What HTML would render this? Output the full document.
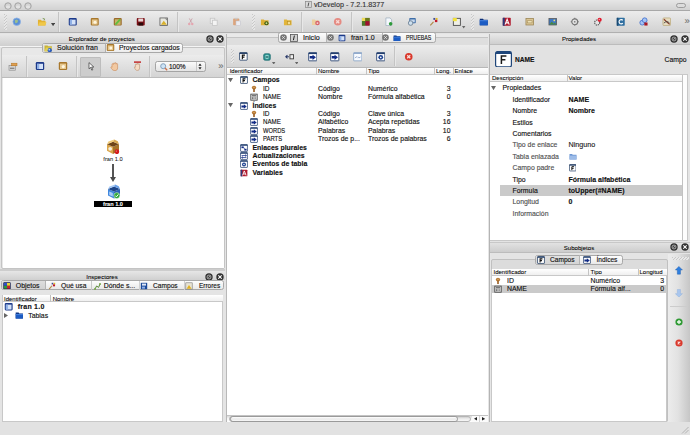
<!DOCTYPE html><html><head><meta charset="utf-8"><title>vDevelop - 7.2.1.8377</title><style>
html,body{margin:0;padding:0}
body{width:690px;height:435px;overflow:hidden;position:relative;background:#e4e4e4;font-family:"Liberation Sans", sans-serif;}
div,svg{position:absolute;box-sizing:border-box}
.t{font-family:"Liberation Sans", sans-serif;-webkit-text-stroke:0.13px currentColor;}

</style></head><body>
<div style="left:0px;top:0px;width:690px;height:10.5px;background:linear-gradient(#e6e6e6,#d2d2d2);border-bottom:1px solid #a8a8a8;"></div>
<svg style="left:3.5px;top:1.5px" width="8" height="8" viewBox="0 0 8 8" preserveAspectRatio="none"><circle cx="4" cy="4" r="3.200" fill="#d4d4d4" stroke="#9c9c9c" stroke-width="0.900"/><ellipse cx="4" cy="5" rx="2.200" ry="1.600" fill="#e2e2e2"/></svg>
<svg style="left:13.600000000000001px;top:1.5px" width="8" height="8" viewBox="0 0 8 8" preserveAspectRatio="none"><circle cx="4" cy="4" r="3.200" fill="#d4d4d4" stroke="#9c9c9c" stroke-width="0.900"/><ellipse cx="4" cy="5" rx="2.200" ry="1.600" fill="#e2e2e2"/></svg>
<svg style="left:24.4px;top:1.5px" width="8" height="8" viewBox="0 0 8 8" preserveAspectRatio="none"><circle cx="4" cy="4" r="3.200" fill="#d4d4d4" stroke="#9c9c9c" stroke-width="0.900"/><ellipse cx="4" cy="5" rx="2.200" ry="1.600" fill="#e2e2e2"/></svg>
<svg style="left:305.3px;top:1.4000000000000004px" width="7" height="7" viewBox="0 0 7 7" preserveAspectRatio="none"><rect x="0.5" y="0.5" width="6" height="6" fill="#d8d8d8" stroke="#888" stroke-width="0.7"/><path d="M3.8 1.6L3 5.4" stroke="#444" stroke-width="0.9"/></svg>
<div class="t" style="top:0.0px;height:10px;line-height:10px;font-size:7.2px;color:#333;white-space:pre;left:314px;">vDevelop - 7.2.1.8377</div>
<svg style="left:675.5px;top:2.7px" width="10" height="5" viewBox="0 0 10 5" preserveAspectRatio="none"><rect x="0.5" y="0.5" width="9" height="4" rx="2" fill="#dcdcdc" stroke="#8e8e8e" stroke-width="0.8"/></svg>
<div style="left:0px;top:10.5px;width:690px;height:22.5px;background:linear-gradient(#ececec,#d2d2d2);border-bottom:1px solid #b0b0b0;"></div>
<div style="left:3.5px;top:14px;width:3px;height:16px;background:repeating-linear-gradient(135deg,#c6c6c6 0,#c6c6c6 1px,#e8e8e8 1px,#e8e8e8 2.2px);opacity:.9;"></div>
<svg style="left:11.55px;top:16.95px" width="9.5" height="9.5" viewBox="0 0 10 10" preserveAspectRatio="none"><circle cx="5" cy="5" r="4" fill="#5b8fd6" stroke="#8fb2e4" stroke-width="0.8"/><path d="M3 3.5l2-1 1.5 1.5-1 2-2 .5z" fill="#9fc08a"/></svg>
<svg style="left:37.25px;top:16.95px" width="9.5" height="9.5" viewBox="0 0 10 10" preserveAspectRatio="none"><path d="M1 3h3l1 1h4v5H1z" fill="#e3b233"/><path d="M1 9l1.5-3.5H10L8.5 9z" fill="#f0c84a"/><path d="M6 1.5l2 .5-.5 1.5" fill="none" stroke="#6a8a3a" stroke-width="0.8"/></svg>
<svg style="left:50.9px;top:23.099999999999998px" width="4.2" height="3.2" viewBox="0 0 4.2 3.2" preserveAspectRatio="none"><path d="M0 0h4.2L2.1 3.2z" fill="#444"/></svg>
<div style="left:58px;top:12px;width:1px;height:20px;background:#c4c4c4;box-shadow:1px 0 0 #e8e8e8;"></div>
<svg style="left:67.75px;top:16.95px" width="9.5" height="9.5" viewBox="0 0 10 10" preserveAspectRatio="none"><rect x="0.800" y="1" width="8.400" height="8" rx="1.200" fill="#1c3a8a"/><rect x="2" y="2.800" width="6" height="5.200" fill="#d4e2f8"/><rect x="2" y="2.800" width="2.200" height="5.200" fill="#8fb0e6"/></svg>
<svg style="left:90.25px;top:16.95px" width="9.5" height="9.5" viewBox="0 0 10 10" preserveAspectRatio="none"><rect x="0.8" y="1" width="8.4" height="8" rx="1.2" fill="#a8772c"/><rect x="2" y="2.6" width="6" height="5.4" fill="#e6c88f"/><circle cx="5.3" cy="5.6" r="1.6" fill="#fff6e0"/></svg>
<svg style="left:113.25px;top:16.95px" width="9.5" height="9.5" viewBox="0 0 10 10" preserveAspectRatio="none"><rect x="0.8" y="1" width="8.4" height="8" rx="1.2" fill="#9a6a2a"/><rect x="2" y="2.4" width="6" height="5.8" fill="#c9b36a"/><path d="M2.5 8L7.5 2.5" stroke="#5fbf3f" stroke-width="1.8"/></svg>
<svg style="left:136.25px;top:16.95px" width="9.5" height="9.5" viewBox="0 0 10 10" preserveAspectRatio="none"><rect x="0.8" y="1" width="8.4" height="8" rx="1" fill="#7a1016"/><rect x="2.4" y="1.6" width="5.2" height="3.2" fill="#e9d6d6"/><rect x="2.6" y="6" width="4.8" height="3" fill="#2a0a0a"/></svg>
<svg style="left:159.25px;top:16.95px" width="9.5" height="9.5" viewBox="0 0 10 10" preserveAspectRatio="none"><rect x="1" y="1" width="8" height="8" fill="#e8e8e0" stroke="#555" stroke-width="0.8"/><path d="M2 8.2L5 4l3.4 4.2z" fill="#d8b02a"/><path d="M6 1.4h2.6V4z" fill="#888"/></svg>
<div style="left:177px;top:12px;width:1px;height:20px;background:#c4c4c4;box-shadow:1px 0 0 #e8e8e8;"></div>
<svg style="left:186.25px;top:16.95px" width="9.5" height="9.5" viewBox="0 0 10 10" preserveAspectRatio="none"><path d="M3.5 1.5L6 6M6.5 1.5L4 6" stroke="#c9a0a8" stroke-width="0.9" fill="none"/><circle cx="3.4" cy="7.3" r="1.3" fill="#e4a6b0"/><circle cx="6.6" cy="7.3" r="1.3" fill="#e4a6b0"/></svg>
<svg style="left:209.25px;top:16.95px" width="9.5" height="9.5" viewBox="0 0 10 10" preserveAspectRatio="none"><rect x="1.3" y="1.3" width="4.8" height="5.4" fill="#eee" stroke="#c4c4c4" stroke-width="0.8"/><rect x="3.8" y="3.4" width="4.8" height="5.4" fill="#f4f4f4" stroke="#c4c4c4" stroke-width="0.8"/></svg>
<svg style="left:232.25px;top:16.95px" width="9.5" height="9.5" viewBox="0 0 10 10" preserveAspectRatio="none"><rect x="1.2" y="1.6" width="6.4" height="7" rx="0.8" fill="#dca47c"/><rect x="3" y="0.9" width="2.8" height="1.6" fill="#c9c9c9"/><rect x="4.2" y="4.2" width="4.6" height="4.8" fill="#ececf2" stroke="#c4c4cc" stroke-width="0.6"/></svg>
<div style="left:252px;top:14px;width:3px;height:16px;background:repeating-linear-gradient(135deg,#c6c6c6 0,#c6c6c6 1px,#e8e8e8 1px,#e8e8e8 2.2px);opacity:.9;"></div>
<svg style="left:260.25px;top:16.95px" width="9.5" height="9.5" viewBox="0 0 10 10" preserveAspectRatio="none"><path d="M1 2.5h3l.8.9H9v5.4H1z" fill="#ddb035"/><circle cx="6.8" cy="6.6" r="2.2" fill="#3c5a12"/><circle cx="6.8" cy="6.6" r="1" fill="#cfe08a"/></svg>
<svg style="left:282.75px;top:16.95px" width="9.5" height="9.5" viewBox="0 0 10 10" preserveAspectRatio="none"><path d="M1 2.5h3l.8.9H9v5.4H1z" fill="#e2b53a"/><rect x="5" y="5" width="2.6" height="3" fill="#f3dc92" stroke="#b08a20" stroke-width="0.5"/></svg>
<div style="left:301px;top:12px;width:1px;height:20px;background:#c4c4c4;box-shadow:1px 0 0 #e8e8e8;"></div>
<svg style="left:310.75px;top:16.95px" width="9.5" height="9.5" viewBox="0 0 10 10" preserveAspectRatio="none"><path d="M1 2.5h3l.8.9H8.4v5H1z" fill="#ecd0a0"/><circle cx="6.8" cy="6.4" r="2.4" fill="#d8646a"/><circle cx="6.8" cy="6.4" r="1" fill="#f6d8d8"/></svg>
<svg style="left:333.25px;top:16.95px" width="9.5" height="9.5" viewBox="0 0 10 10" preserveAspectRatio="none"><circle cx="5" cy="5" r="4" fill="#e58a82"/><path d="M3.4 3.4l3.2 3.2M6.6 3.4L3.4 6.6" stroke="#f8dcd8" stroke-width="1.3"/></svg>
<div style="left:351px;top:12px;width:1px;height:20px;background:#c4c4c4;box-shadow:1px 0 0 #e8e8e8;"></div>
<svg style="left:361.25px;top:16.95px" width="9.5" height="9.5" viewBox="0 0 10 10" preserveAspectRatio="none"><rect x="1" y="1" width="8" height="8" fill="#5a6a1a"/><rect x="1" y="1" width="3.6" height="3.4" fill="#f0dc5a"/><rect x="4.6" y="1" width="4.4" height="3.4" fill="#6a7a1a"/><rect x="1" y="4.4" width="3.6" height="4.6" fill="#4a7a2a"/><rect x="4.6" y="4.4" width="4.4" height="4.6" fill="#a01030"/></svg>
<svg style="left:383.75px;top:16.95px" width="9.5" height="9.5" viewBox="0 0 10 10" preserveAspectRatio="none"><path d="M2 1h4.4L8 2.8V9H2z" fill="#f4f8fc" stroke="#9ab" stroke-width="0.7"/><circle cx="7" cy="7.2" r="1.9" fill="#2f9a3a"/></svg>
<svg style="left:406.75px;top:16.95px" width="9.5" height="9.5" viewBox="0 0 10 10" preserveAspectRatio="none"><rect x="2.4" y="1" width="6.8" height="5.6" rx="0.8" fill="#3f6ea8"/><rect x="3.4" y="2.6" width="4.8" height="3" fill="#c6d8ee"/><circle cx="3.8" cy="6.4" r="2.4" fill="#cfe0ee" stroke="#6b7f93" stroke-width="0.9"/></svg>
<svg style="left:429.25px;top:16.95px" width="9.5" height="9.5" viewBox="0 0 10 10" preserveAspectRatio="none"><path d="M1.4 8.8L5.2 4.6" stroke="#b08a4a" stroke-width="1.3"/><rect x="4.6" y="1" width="4.4" height="4.4" fill="#ede4e4"/><rect x="4.6" y="1" width="2" height="2" fill="#3a4a9a"/><rect x="7" y="1" width="2" height="2" fill="#e0c020"/><rect x="6.2" y="3" width="2.6" height="2.4" fill="#c01828"/></svg>
<svg style="left:452.25px;top:16.95px" width="9.5" height="9.5" viewBox="0 0 10 10" preserveAspectRatio="none"><rect x="1.4" y="1.4" width="7.4" height="7.4" fill="#efefe6" stroke="#444" stroke-width="0.9"/><rect x="1" y="1" width="4" height="3.4" fill="#f2e23a"/></svg>
<svg style="left:462.3px;top:26.2px" width="3.4" height="2.6" viewBox="0 0 3.4 2.6" preserveAspectRatio="none"><path d="M0 0h3.4L1.7 2.6z" fill="#666"/></svg>
<div style="left:471px;top:14px;width:3px;height:16px;background:repeating-linear-gradient(135deg,#c6c6c6 0,#c6c6c6 1px,#e8e8e8 1px,#e8e8e8 2.2px);opacity:.9;"></div>
<svg style="left:479.25px;top:16.95px" width="9.5" height="9.5" viewBox="0 0 10 10" preserveAspectRatio="none"><path d="M0.800 1.800h3.400l.8 1h4.200v6H0.800z" fill="#0a2f7a"/><rect x="0.800" y="3.400" width="8.400" height="5.400" fill="#1c5cc4"/><rect x="0.800" y="3.400" width="8.400" height="1" fill="#4a86e0"/></svg>
<svg style="left:501.75px;top:16.95px" width="9.5" height="9.5" viewBox="0 0 10 10" preserveAspectRatio="none"><rect x="0.8" y="0.8" width="8.4" height="8.4" rx="0.8" fill="#b0182c"/><rect x="0.8" y="0.8" width="2" height="8.4" fill="#2a3a7a"/><path d="M3.2 8L5.4 2.4 7.6 8M4 6.2h2.8" stroke="#fff" stroke-width="1.1" fill="none"/></svg>
<svg style="left:524.75px;top:16.95px" width="9.5" height="9.5" viewBox="0 0 10 10" preserveAspectRatio="none"><rect x="1" y="1.6" width="8" height="6.8" fill="#d9c493" stroke="#9a8350" stroke-width="0.8"/><rect x="2.4" y="4" width="5" height="2.2" fill="#efe2b8" stroke="#9a8350" stroke-width="0.5"/></svg>
<svg style="left:547.75px;top:16.95px" width="9.5" height="9.5" viewBox="0 0 10 10" preserveAspectRatio="none"><rect x="1" y="1.6" width="8" height="6.8" fill="#3f78c0" stroke="#555" stroke-width="0.8"/><path d="M1.4 8l2.6-3 2 2 1.4-1.2L8.6 8z" fill="#4a8a3a"/><circle cx="6.6" cy="3.6" r="0.9" fill="#f4e070"/></svg>
<svg style="left:570.25px;top:16.95px" width="9.5" height="9.5" viewBox="0 0 10 10" preserveAspectRatio="none"><circle cx="5" cy="5" r="3.1" fill="#e2e2e2" stroke="#777" stroke-width="1.2"/><circle cx="5" cy="5" r="0.9" fill="#777"/><path d="M5 0.8v1.2M5 8v1.2M0.8 5h1.2M8 5h1.2" stroke="#777" stroke-width="1.1"/></svg>
<svg style="left:593.25px;top:16.95px" width="9.5" height="9.5" viewBox="0 0 10 10" preserveAspectRatio="none"><circle cx="4.4" cy="5.8" r="2.7" fill="#e4e4e4" stroke="#555" stroke-width="1.2" stroke-dasharray="1.4 0.8"/><circle cx="7" cy="3" r="2.2" fill="#e0182c"/><circle cx="6.6" cy="2.6" r="0.7" fill="#f8b0b0"/></svg>
<svg style="left:616.25px;top:16.95px" width="9.5" height="9.5" viewBox="0 0 10 10" preserveAspectRatio="none"><rect x="0.8" y="0.8" width="8.4" height="8.4" rx="0.8" fill="#2f6fa0"/><rect x="0.8" y="0.8" width="1.6" height="8.4" fill="#1d4a70"/><path d="M7.2 3.4A2.3 2.3 0 1 0 7.2 6.6" stroke="#fff" stroke-width="1.2" fill="none"/></svg>
<svg style="left:639.25px;top:16.95px" width="9.5" height="9.5" viewBox="0 0 10 10" preserveAspectRatio="none"><circle cx="3.400" cy="6" r="2.500" fill="#a4c4f4" stroke="#3a68cc" stroke-width="0.800"/><circle cx="6" cy="3.400" r="2.500" fill="#a4c4f4" stroke="#3a68cc" stroke-width="0.800"/><rect x="5.600" y="5.800" width="3.400" height="3.200" fill="#a81824"/></svg>
<svg style="left:661.75px;top:16.95px" width="9.5" height="9.5" viewBox="0 0 10 10" preserveAspectRatio="none"><rect x="1" y="1" width="8" height="8" rx="1" fill="#e6dcc0" stroke="#b09a60" stroke-width="0.6"/><path d="M2 2.4l6 5.4" stroke="#8a3a2a" stroke-width="1.2"/><path d="M2 6.4c2-2 4-2 6 0" stroke="#444" stroke-width="0.9" fill="none"/></svg>
<div class="t" style="top:16.3px;height:10px;line-height:10px;font-size:9.5px;color:#707070;white-space:pre;left:684.5px;">»</div>
<div style="left:0px;top:33.5px;width:225.5px;height:12px;background:linear-gradient(#e8e8e8,#cfcfcf);"></div>
<div style="left:0px;top:45.5px;width:225.5px;height:1.5px;background:#f4f4f4;"></div>
<div class="t" style="top:34.3px;height:10px;line-height:10px;font-size:6.1px;color:#000;white-space:pre;-webkit-text-stroke-width:0.06px;left:1.7000000000000028px;width:200px;text-align:center;">Explorador de proyectos</div>
<svg style="left:205.6px;top:34.6px" width="8" height="8" viewBox="0 0 8 8" preserveAspectRatio="none"><circle cx="4" cy="4" r="3.700" fill="#303030"/><circle cx="4" cy="4" r="2" fill="#444" stroke="#cfcfcf" stroke-width="0.700"/><path d="M3.400 4.600l1.400-1.400" stroke="#e0e0e0" stroke-width="0.700"/></svg>
<svg style="left:216.0px;top:34.6px" width="8" height="8" viewBox="0 0 8 8" preserveAspectRatio="none"><circle cx="4" cy="4" r="3.700" fill="#303030"/><path d="M2.600 2.600l2.800 2.800M5.400 2.600l-2.800 2.800" stroke="#f8f8f8" stroke-width="1.050" stroke-linecap="round"/></svg>
<div style="left:0.5px;top:47px;width:224.5px;height:221.6px;background:#e8e8e8;border:1px solid #c4c4c4;border-radius:2px;"></div>
<div style="left:41.5px;top:42.8px;width:141.8px;height:9.8px;background:linear-gradient(#fdfdfd,#ececec);border:1px solid #a8a8a8;border-radius:2.5px;"></div>
<div style="left:42.5px;top:43.8px;width:62.5px;height:7.8px;background:linear-gradient(#e4e4e4,#d9d9d9);"></div>
<div style="left:105px;top:43.3px;width:1px;height:8.8px;background:#b0b0b0;"></div>
<svg style="left:43.75px;top:43.55px" width="8.5" height="8.5" viewBox="0 0 8.5 8.5" preserveAspectRatio="none"><path d="M0.500 1.400h3l.8.900h3.600v5H0.500z" fill="#c9b437"/><path d="M0.500 7.300L2 3.600h6.300L7 7.300z" fill="#e0cf58"/><circle cx="5.800" cy="6.200" r="2.100" fill="#2a5cc0"/><circle cx="5.300" cy="5.700" r="0.900" fill="#a8caf6"/></svg>
<div class="t" style="top:42.9px;height:10px;line-height:10px;font-size:7.0px;color:#111;white-space:pre;left:57px;">Solución fran</div>
<svg style="left:106.0px;top:43.3px" width="9" height="9" viewBox="0 0 10 10" preserveAspectRatio="none"><rect x="0.8" y="1" width="8.4" height="8" rx="1.2" fill="#a8772c"/><rect x="2" y="2.6" width="6" height="5.4" fill="#e6c88f"/><circle cx="5.3" cy="5.6" r="1.6" fill="#fff6e0"/></svg>
<div class="t" style="top:42.9px;height:10px;line-height:10px;font-size:7.0px;color:#111;white-space:pre;left:118.5px;transform:scaleX(0.981);transform-origin:left center;">Proyectos cargados</div>
<div style="left:1.5px;top:55px;width:222.5px;height:23px;background:linear-gradient(#ececec,#d4d4d4);border-bottom:1px solid #bcbcbc;"></div>
<svg style="left:8.0px;top:61.8px" width="10" height="9" viewBox="0 0 10 9" preserveAspectRatio="none"><rect x="1" y="3.4" width="6.4" height="4.8" fill="#d8d8d8" stroke="#888" stroke-width="0.6"/><rect x="3.6" y="1.2" width="5.4" height="2.6" fill="#e0a050" stroke="#b07020" stroke-width="0.5"/><rect x="2" y="5.6" width="4.4" height="1.4" fill="#888"/></svg>
<div style="left:26px;top:56px;width:1px;height:21px;background:#c4c4c4;box-shadow:1px 0 0 #e8e8e8;"></div>
<svg style="left:35.4px;top:61.3px" width="10" height="10" viewBox="0 0 10 10" preserveAspectRatio="none"><rect x="0.800" y="1" width="8.400" height="8" rx="1.200" fill="#1c3a8a"/><rect x="2" y="2.800" width="6" height="5.200" fill="#d4e2f8"/><rect x="2" y="2.800" width="2.200" height="5.200" fill="#8fb0e6"/></svg>
<svg style="left:58.2px;top:61.3px" width="10" height="10" viewBox="0 0 10 10" preserveAspectRatio="none"><rect x="0.8" y="1" width="8.4" height="8" rx="1.2" fill="#a8772c"/><rect x="2" y="2.6" width="6" height="5.4" fill="#e6c88f"/><circle cx="5.3" cy="5.6" r="1.6" fill="#fff6e0"/></svg>
<div style="left:76px;top:56px;width:1px;height:21px;background:#c4c4c4;box-shadow:1px 0 0 #e8e8e8;"></div>
<div style="left:80px;top:56.5px;width:21px;height:20.5px;background:#cdcdcd;border:1px solid #bdbdbd;border-radius:1px;"></div>
<svg style="left:87.5px;top:62.0px" width="6" height="9" viewBox="0 0 6 9" preserveAspectRatio="none"><path d="M1 0.6v6.2l1.6-1.4 1.2 2.8 1-.5-1.2-2.7h2.2z" fill="#fff" stroke="#333" stroke-width="0.7"/></svg>
<svg style="left:109.5px;top:61.8px" width="9" height="9" viewBox="0 0 9 9" preserveAspectRatio="none"><path d="M2 4V2.4a.7.7 0 011.4 0V1.6a.7.7 0 011.4 0V1.4a.7.7 0 011.4 0v.8a.7.7 0 011.4 0V6c0 1.6-1 2.6-2.6 2.6S2.4 8 1.4 6.4L.8 5.2c.4-.6 1-.4 1.2 0z" fill="#f2c9a2" stroke="#c98a5a" stroke-width="0.6"/></svg>
<svg style="left:132.5px;top:61.3px" width="9" height="10" viewBox="0 0 9 10" preserveAspectRatio="none"><rect x="1" y="0.4" width="7" height="1.4" fill="#c02020"/><path d="M2.4 5V3.6a.7.7 0 011.4 0v-.4a.7.7 0 011.4 0v.2a.7.7 0 011.4 0V7c0 1.4-.8 2.4-2.2 2.4S2.6 8.8 1.8 7.4L1.4 6.2c.4-.5.8-.3 1 0z" fill="#f4dcc4" stroke="#b98a6a" stroke-width="0.6"/></svg>
<div style="left:148.7px;top:56px;width:1px;height:21px;background:#c4c4c4;box-shadow:1px 0 0 #e8e8e8;"></div>
<div style="left:155px;top:61px;width:50.8px;height:10.5px;background:linear-gradient(#fbfbfb,#e4e4e4);border:1px solid #a4a4a4;border-radius:2.5px;"></div>
<div style="left:195.5px;top:62px;width:0.8px;height:8.5px;background:#c8c8c8;"></div>
<svg style="left:159.5px;top:62.5px" width="8" height="8" viewBox="0 0 8 8" preserveAspectRatio="none"><circle cx="3.2" cy="3.2" r="2.5" fill="#cfe4f6" stroke="#7a9ab8" stroke-width="0.9"/><path d="M5 5l2.2 2.2" stroke="#d0704a" stroke-width="1.3"/></svg>
<div class="t" style="top:62.0px;height:10px;line-height:10px;font-size:6.5px;color:#111;white-space:pre;left:169px;">100%</div>
<svg style="left:198.0px;top:62.900000000000006px" width="4" height="7" viewBox="0 0 4 7" preserveAspectRatio="none"><path d="M0.4 2.8L2 0.6 3.6 2.8zM0.4 4.2L2 6.4 3.6 4.2z" fill="#222"/></svg>
<div class="t" style="top:61.0px;height:10px;line-height:10px;font-size:9.5px;color:#707070;white-space:pre;left:218.3px;">»</div>
<div style="left:2.5px;top:78px;width:221.2px;height:189.8px;background:#fff;"></div>
<svg style="left:106.3px;top:138.9px" width="14" height="15.4" viewBox="0 0 14 15" preserveAspectRatio="none"><path d="M1 5L7 7.500V14.500L1 11.500z" fill="#dba64a"/><path d="M13 5L7 7.500V14.500L13 11.500z" fill="#a87428"/><path d="M1 5L7 2.600 13 5 7 7.500z" fill="#6e4518"/><path d="M1 5L2.400 2.400 8.200 0.600 7 2.600z" fill="#f0cc7a"/><path d="M13 5L11.800 2.200 8.200 0.600 7 2.600z" fill="#d8aa52"/><circle cx="4.200" cy="9.600" r="1.900" fill="#f6eedc"/><circle cx="10.900" cy="12.400" r="2.300" fill="#d41c1c"/><circle cx="10.300" cy="11.800" r="0.700" fill="#f08a8a"/></svg>
<div class="t" style="top:154.3px;height:10px;line-height:10px;font-size:5.7px;color:#222;white-space:pre;-webkit-text-stroke-width:0.06px;left:13px;width:200px;text-align:center;">fran 1.0</div>
<div style="left:112.2px;top:164px;width:1.5px;height:15px;background:#555;"></div>
<svg style="left:110.0px;top:177.3px" width="6" height="5" viewBox="0 0 6 5" preserveAspectRatio="none"><path d="M0 0h6L3 5z" fill="#4a4a4a"/></svg>
<svg style="left:106.6px;top:184.0px" width="14" height="15" viewBox="0 0 14 15" preserveAspectRatio="none"><path d="M1 5L7 7.500V14.500L1 11.500z" fill="#4088de"/><path d="M13 5L7 7.500V14.500L13 11.500z" fill="#2a62b8"/><path d="M1 5L7 2.600 13 5 7 7.500z" fill="#1c4488"/><path d="M1 5L2.400 2.400 8.200 0.600 7 2.600z" fill="#a4c8f6"/><path d="M13 5L11.800 2.200 8.200 0.600 7 2.600z" fill="#6aa0e8"/><path d="M2.200 7.400L5.800 8.900V12.600L2.200 11z" fill="#a8ccf8"/><circle cx="9.800" cy="11.600" r="3" fill="#2ea83a" stroke="#eaf6ea" stroke-width="0.500"/><path d="M8.300 11.600l1.100 1.200 2-2.400" stroke="#fff" stroke-width="1" fill="none"/></svg>
<div style="left:94px;top:200.8px;width:38px;height:6.6px;background:#000;"></div>
<div class="t" style="top:199.2px;height:10px;line-height:10px;font-size:5.6px;color:#fff;white-space:pre;font-weight:bold;-webkit-text-stroke-width:0.06px;left:13px;width:200px;text-align:center;">fran 1.0</div>
<div style="left:0px;top:268.7px;width:225.5px;height:2.5px;background:#cdcdcd;"></div>
<div style="left:0px;top:271.2px;width:225.5px;height:9.3px;background:linear-gradient(#e6e6e6,#d0d0d0);"></div>
<div class="t" style="top:271.7px;height:10px;line-height:10px;font-size:6.1px;color:#000;white-space:pre;-webkit-text-stroke-width:0.06px;left:2px;width:200px;text-align:center;">Inspectores</div>
<svg style="left:205.1px;top:272.7px" width="8" height="8" viewBox="0 0 8 8" preserveAspectRatio="none"><circle cx="4" cy="4" r="3.700" fill="#303030"/><circle cx="4" cy="4" r="2" fill="#444" stroke="#cfcfcf" stroke-width="0.700"/><path d="M3.400 4.600l1.400-1.400" stroke="#e0e0e0" stroke-width="0.700"/></svg>
<svg style="left:215.5px;top:272.7px" width="8" height="8" viewBox="0 0 8 8" preserveAspectRatio="none"><circle cx="4" cy="4" r="3.700" fill="#303030"/><path d="M2.600 2.600l2.800 2.800M5.400 2.600l-2.800 2.800" stroke="#f8f8f8" stroke-width="1.050" stroke-linecap="round"/></svg>
<div style="left:0.8px;top:280.3px;width:223.2px;height:10px;background:linear-gradient(#fdfdfd,#e9e9e9);border:1px solid #a8a8a8;border-radius:2.5px;"></div>
<div style="left:1.8px;top:281.3px;width:43.2px;height:8px;background:linear-gradient(#dedede,#d2d2d2);"></div>
<div style="left:45px;top:280.8px;width:1px;height:9px;background:#b4b4b4;"></div>
<div style="left:90.8px;top:280.8px;width:1px;height:9px;background:#c8c8c8;"></div>
<div style="left:138.5px;top:280.8px;width:1px;height:9px;background:#d0d0d0;"></div>
<div style="left:183.5px;top:280.8px;width:1px;height:9px;background:#d0d0d0;"></div>
<svg style="left:2.7px;top:281.7px" width="8" height="7.6" viewBox="0 0 8 7.6" preserveAspectRatio="none"><rect x="0.300" y="0.300" width="7.400" height="7" rx="0.800" fill="#1a2250"/><rect x="1" y="1" width="3" height="2.800" fill="#2f50c8"/><rect x="4" y="1" width="3" height="2.800" fill="#e8d030"/><rect x="1" y="3.800" width="3" height="2.800" fill="#2f9a3a"/><rect x="4" y="3.800" width="3" height="2.800" fill="#c82030"/></svg>
<div class="t" style="top:280.8px;height:10px;line-height:10px;font-size:6.9px;color:#111;white-space:pre;left:15.8px;">Objetos</div>
<svg style="left:47.5px;top:281.8px" width="8" height="8" viewBox="0 0 10 10" preserveAspectRatio="none"><path d="M1.4 8.8L5.2 4.6" stroke="#b08a4a" stroke-width="1.3"/><rect x="4.6" y="1" width="4.4" height="4.4" fill="#ede4e4"/><rect x="4.6" y="1" width="2" height="2" fill="#3a4a9a"/><rect x="7" y="1" width="2" height="2" fill="#e0c020"/><rect x="6.2" y="3" width="2.6" height="2.4" fill="#c01828"/></svg>
<div class="t" style="top:280.8px;height:10px;line-height:10px;font-size:6.9px;color:#111;white-space:pre;left:60.8px;transform:scaleX(0.978);transform-origin:left center;">Qué usa</div>
<svg style="left:92.5px;top:281.8px" width="8" height="8" viewBox="0 0 8 8" preserveAspectRatio="none"><path d="M2 7l1.600-3 2 1.400L7 2" stroke="#5a8a3a" stroke-width="1" fill="none"/><circle cx="2" cy="7" r="1" fill="#7aa84a"/><circle cx="7" cy="2" r="1" fill="#7aa84a"/></svg>
<div class="t" style="top:280.8px;height:10px;line-height:10px;font-size:6.9px;color:#111;white-space:pre;left:103.7px;">Dónde s...</div>
<svg style="left:139.5px;top:281.8px" width="8" height="8" viewBox="0 0 8 8" preserveAspectRatio="none"><rect x="0.8" y="0.8" width="6.400" height="6.400" fill="#1a4a9a"/><rect x="2" y="1.600" width="4" height="2" fill="#dfe8f8"/><rect x="2" y="4.600" width="3" height="2" fill="#8fb0e8"/></svg>
<div class="t" style="top:280.8px;height:10px;line-height:10px;font-size:6.9px;color:#111;white-space:pre;left:153px;transform:scaleX(0.961);transform-origin:left center;">Campos</div>
<svg style="left:185.0px;top:281.8px" width="8" height="8" viewBox="0 0 8 8" preserveAspectRatio="none"><rect x="0.800" y="0.800" width="6.400" height="6.400" fill="#e8e4d4" stroke="#777" stroke-width="0.600"/><path d="M1.600 6.800L4 3l2.600 3.800z" fill="#e0b020"/></svg>
<div class="t" style="top:280.8px;height:10px;line-height:10px;font-size:6.9px;color:#111;white-space:pre;left:198.8px;transform:scaleX(0.937);transform-origin:left center;">Errores</div>
<div style="left:2px;top:294.5px;width:221.2px;height:127.5px;background:#fff;border:1px solid #c8c8c8;"></div>
<div style="left:2.5px;top:295px;width:220.2px;height:7.2px;background:linear-gradient(#ffffff,#efefef);border-bottom:1px solid #c8c8c8;"></div>
<div style="left:49.5px;top:295px;width:1px;height:7px;background:#c0c0c0;"></div>
<div class="t" style="top:293.6px;height:10px;line-height:10px;font-size:6.0px;color:#000;white-space:pre;-webkit-text-stroke-width:0.06px;left:4px;">Identificador</div>
<div class="t" style="top:293.6px;height:10px;line-height:10px;font-size:6.0px;color:#000;white-space:pre;-webkit-text-stroke-width:0.06px;left:52.7px;">Nombre</div>
<svg style="left:4.3px;top:301.90000000000003px" width="9.4" height="9.4" viewBox="0 0 10 10" preserveAspectRatio="none"><rect x="0.800" y="1" width="8.400" height="8" rx="1.200" fill="#1c3a8a"/><rect x="2" y="2.800" width="6" height="5.200" fill="#d4e2f8"/><rect x="2" y="2.800" width="2.200" height="5.200" fill="#8fb0e6"/></svg>
<div class="t" style="top:302.0px;height:10px;line-height:10px;font-size:7px;color:#111;white-space:pre;font-weight:bold;left:17.7px;letter-spacing:0.25px;">fran 1.0</div>
<svg style="left:3.8000000000000003px;top:312.9px" width="4.2" height="5" viewBox="0 0 4.2 5" preserveAspectRatio="none"><path d="M0 0v5L4.2 2.5z" fill="#666"/></svg>
<svg style="left:14.7px;top:310.9px" width="8.6" height="8.6" viewBox="0 0 10 10" preserveAspectRatio="none"><path d="M0.800 1.800h3.400l.8 1h4.200v6H0.800z" fill="#0a2f7a"/><rect x="0.800" y="3.400" width="8.400" height="5.400" fill="#1c5cc4"/><rect x="0.800" y="3.400" width="8.400" height="1" fill="#4a86e0"/></svg>
<div class="t" style="top:310.5px;height:10px;line-height:10px;font-size:6.9px;color:#111;white-space:pre;left:28.2px;">Tablas</div>
<div style="left:225.3px;top:33.5px;width:1.7px;height:389px;background:#e4e4e4;"></div>
<div style="left:225.8px;top:33.5px;width:0.9px;height:389px;background:#b8b8b8;"></div>
<div style="left:227px;top:33.5px;width:260.5px;height:11.5px;background:#dedede;"></div>
<div style="left:227px;top:33.5px;width:260.5px;height:3.8px;background:#e9e9e9;"></div>
<div style="left:227px;top:37.3px;width:260.5px;height:1px;background:#c4c4c4;"></div>
<div style="left:277.5px;top:32.3px;width:158.5px;height:11px;background:linear-gradient(#fdfdfd,#e9e9e9);border:1px solid #a8a8a8;border-radius:2.5px;"></div>
<div style="left:326.5px;top:33.6px;width:55px;height:8.4px;background:linear-gradient(#e0e0e0,#d2d2d2);"></div>
<div style="left:326px;top:33.1px;width:1px;height:9.4px;background:#b4b4b4;"></div>
<div style="left:381.5px;top:33.1px;width:1px;height:9.4px;background:#b4b4b4;"></div>
<svg style="left:279.5px;top:34.3px" width="7" height="7" viewBox="0 0 7 7" preserveAspectRatio="none"><circle cx="3.5" cy="3.5" r="3.300" fill="#767676"/><path d="M2.3 2.3l2.4 2.4M4.7 2.3L2.3 4.7" stroke="#e4e4e4" stroke-width="1"/></svg>
<svg style="left:289.5px;top:33.8px" width="8" height="8" viewBox="0 0 8 8" preserveAspectRatio="none"><rect x="0.500" y="0.500" width="7" height="7" fill="#d0d0d0" stroke="#555" stroke-width="0.800"/><path d="M4.400 1.600L3.400 6.200" stroke="#222" stroke-width="1"/></svg>
<div class="t" style="top:32.8px;height:10px;line-height:10px;font-size:7.2px;color:#111;white-space:pre;left:303px;">Inicio</div>
<svg style="left:326.9px;top:34.3px" width="7" height="7" viewBox="0 0 7 7" preserveAspectRatio="none"><circle cx="3.5" cy="3.5" r="3.300" fill="#767676"/><path d="M2.3 2.3l2.4 2.4M4.7 2.3L2.3 4.7" stroke="#e4e4e4" stroke-width="1"/></svg>
<svg style="left:338.0px;top:33.8px" width="8" height="8" viewBox="0 0 10 10" preserveAspectRatio="none"><rect x="0.800" y="1" width="8.400" height="8" rx="1.200" fill="#1c3a8a"/><rect x="2" y="2.800" width="6" height="5.200" fill="#d4e2f8"/><rect x="2" y="2.800" width="2.200" height="5.200" fill="#8fb0e6"/></svg>
<div class="t" style="top:32.8px;height:10px;line-height:10px;font-size:7.0px;color:#111;white-space:pre;left:351px;">fran 1.0</div>
<svg style="left:381.7px;top:34.3px" width="7" height="7" viewBox="0 0 7 7" preserveAspectRatio="none"><circle cx="3.5" cy="3.5" r="3.300" fill="#767676"/><path d="M2.3 2.3l2.4 2.4M4.7 2.3L2.3 4.7" stroke="#e4e4e4" stroke-width="1"/></svg>
<svg style="left:392.8px;top:33.8px" width="8" height="8" viewBox="0 0 10 10" preserveAspectRatio="none"><path d="M0.800 1.800h3.400l.8 1h4.200v6H0.800z" fill="#0a2f7a"/><rect x="0.800" y="3.400" width="8.400" height="5.400" fill="#1c5cc4"/><rect x="0.800" y="3.400" width="8.400" height="1" fill="#4a86e0"/></svg>
<div class="t" style="top:32.8px;height:10px;line-height:10px;font-size:6.8px;color:#111;white-space:pre;left:406px;transform:scaleX(0.778);transform-origin:left center;">PRUEBAS</div>
<div style="left:227px;top:45px;width:260.5px;height:23px;background:linear-gradient(#ececec,#d4d4d4);border-bottom:1px solid #b8b8b8;"></div>
<div style="left:231px;top:49px;width:3px;height:13.5px;background:repeating-linear-gradient(135deg,#c6c6c6 0,#c6c6c6 1px,#e8e8e8 1px,#e8e8e8 2.2px);opacity:.9;"></div>
<svg style="left:239.4px;top:52.4px" width="8.8" height="8.8" viewBox="0 0 10 10" preserveAspectRatio="none"><rect x="0.7" y="0.7" width="8.600" height="8.600" rx="0.5" fill="#fff" stroke="#1f3a62" stroke-width="0.900"/><rect x="0.7" y="0.7" width="8.600" height="1.500" fill="#1f3a62"/><path d="M3.800 8.200V3.600h3M3.800 5.800h2.400" stroke="#111" stroke-width="1.300" fill="none"/></svg>
<svg style="left:262.5px;top:52.8px" width="8" height="8" viewBox="0 0 10 10" preserveAspectRatio="none"><rect x="0.800" y="0.800" width="8.400" height="8.400" rx="2" fill="#2a8c8c" stroke="#1c6c70" stroke-width="0.800"/><circle cx="5" cy="5" r="2.700" fill="#8fd8d0"/><rect x="3" y="4.300" width="4" height="1.400" fill="#0f4a52"/></svg>
<svg style="left:272.3px;top:61.900000000000006px" width="3.4" height="2.6" viewBox="0 0 3.4 2.6" preserveAspectRatio="none"><path d="M0 0h3.4L1.7 2.6z" fill="#666"/></svg>
<svg style="left:284.75px;top:52.25px" width="9.5" height="9.5" viewBox="0 0 10 10" preserveAspectRatio="none"><path d="M0.800 5h3.400M2.600 3.200L0.800 5l1.800 1.800" stroke="#2a3a6a" stroke-width="1.100" fill="none"/><rect x="5.200" y="2.800" width="3.800" height="4.400" fill="#f0f0f0" stroke="#444" stroke-width="1"/></svg>
<svg style="left:295.1px;top:61.900000000000006px" width="3.4" height="2.6" viewBox="0 0 3.4 2.6" preserveAspectRatio="none"><path d="M0 0h3.4L1.7 2.6z" fill="#666"/></svg>
<svg style="left:307.75px;top:52.25px" width="9.5" height="9.5" viewBox="0 0 10 10" preserveAspectRatio="none"><rect x="0.7" y="0.7" width="8.600" height="8.600" rx="0.5" fill="#fff" stroke="#233f6e" stroke-width="0.900"/><rect x="0.7" y="0.7" width="8.600" height="1.500" fill="#233f6e"/><path d="M1.800 4.300h3V2.900L8.400 5.600 4.800 8.300V6.900H1.800z" fill="#122c86"/></svg>
<svg style="left:330.25px;top:52.25px" width="9.5" height="9.5" viewBox="0 0 10 10" preserveAspectRatio="none"><rect x="0.7" y="0.7" width="8.600" height="8.600" rx="0.5" fill="#fff" stroke="#233f6e" stroke-width="0.900"/><rect x="0.7" y="0.7" width="8.600" height="1.500" fill="#233f6e"/><path d="M1.800 4.300h3V2.900L8.400 5.600 4.800 8.300V6.900H1.800z" fill="#122c86"/></svg>
<svg style="left:352.75px;top:52.25px" width="9.5" height="9.5" viewBox="0 0 10 10" preserveAspectRatio="none"><rect x="0.7" y="0.7" width="8.600" height="8.600" rx="0.5" fill="#f8fbff" stroke="#8aa4c8" stroke-width="0.900"/><rect x="0.7" y="0.7" width="8.600" height="1.300" fill="#8aa4c8"/><path d="M2.200 6.400l1.400-1.400 1 1M5.400 5l1.200 1.400 1.200-1.400" stroke="#5a7ab0" stroke-width="0.700" fill="none"/></svg>
<svg style="left:375.75px;top:52.25px" width="9.5" height="9.5" viewBox="0 0 10 10" preserveAspectRatio="none"><rect x="0.7" y="0.7" width="8.600" height="8.600" rx="0.5" fill="#fff" stroke="#233f6e" stroke-width="0.900"/><rect x="0.7" y="0.7" width="8.600" height="1.500" fill="#233f6e"/><circle cx="5" cy="5.600" r="2.500" fill="#1a3f8f"/><circle cx="5" cy="5.600" r="0.900" fill="#fff"/></svg>
<div style="left:393.5px;top:46px;width:1px;height:20px;background:#c4c4c4;box-shadow:1px 0 0 #e8e8e8;"></div>
<svg style="left:403.75px;top:52.25px" width="9.5" height="9.5" viewBox="0 0 10 10" preserveAspectRatio="none"><circle cx="5" cy="5" r="4" fill="#d9382c"/><path d="M3.4 3.4l3.2 3.2M6.6 3.4L3.4 6.6" stroke="#fbe0dc" stroke-width="1.3"/></svg>
<div style="left:227px;top:68px;width:260.5px;height:354px;background:#fff;"></div>
<div style="left:227px;top:68px;width:260.5px;height:7.2px;background:linear-gradient(#ffffff,#efefef);border-bottom:1px solid #c8c8c8;"></div>
<div style="left:316px;top:68px;width:1px;height:7px;background:#c4c4c4;"></div>
<div style="left:366px;top:68px;width:1px;height:7px;background:#c4c4c4;"></div>
<div style="left:434px;top:68px;width:1px;height:7px;background:#c4c4c4;"></div>
<div style="left:452.5px;top:68px;width:1px;height:7px;background:#c4c4c4;"></div>
<div class="t" style="top:66.3px;height:10px;line-height:10px;font-size:6.0px;color:#000;white-space:pre;-webkit-text-stroke-width:0.06px;left:229.7px;">Identificador</div>
<div class="t" style="top:66.3px;height:10px;line-height:10px;font-size:6.0px;color:#000;white-space:pre;-webkit-text-stroke-width:0.06px;left:318px;">Nombre</div>
<div class="t" style="top:66.3px;height:10px;line-height:10px;font-size:6.0px;color:#000;white-space:pre;-webkit-text-stroke-width:0.06px;left:368px;">Tipo</div>
<div class="t" style="top:66.3px;height:10px;line-height:10px;font-size:6.0px;color:#000;white-space:pre;-webkit-text-stroke-width:0.06px;left:436px;">Long.</div>
<div class="t" style="top:66.3px;height:10px;line-height:10px;font-size:6.0px;color:#000;white-space:pre;-webkit-text-stroke-width:0.06px;left:454.5px;">Enlace</div>
<svg style="left:228.0px;top:78.2px" width="5" height="4.2" viewBox="0 0 5 4.2" preserveAspectRatio="none"><path d="M0 0h5L2.5 4.2z" fill="#666"/></svg>
<svg style="left:240.0px;top:76.3px" width="8" height="8" viewBox="0 0 10 10" preserveAspectRatio="none"><rect x="0.7" y="0.7" width="8.600" height="8.600" rx="0.5" fill="#fff" stroke="#1f3a62" stroke-width="0.900"/><rect x="0.7" y="0.7" width="8.600" height="1.500" fill="#1f3a62"/><path d="M3.800 8.200V3.600h3M3.800 5.800h2.400" stroke="#111" stroke-width="1.300" fill="none"/></svg>
<div class="t" style="top:75.3px;height:10px;line-height:10px;font-size:6.9px;color:#111;white-space:pre;font-weight:bold;left:252.5px;">Campos</div>
<svg style="left:250.0px;top:84.7px" width="8" height="8" viewBox="0 0 10 10" preserveAspectRatio="none"><ellipse cx="5" cy="3.200" rx="2.700" ry="2.300" fill="#b87a34"/><circle cx="5" cy="2.800" r="0.700" fill="#ecc890"/><rect x="4" y="4.600" width="2" height="4.200" fill="#9a5c22"/></svg>
<div class="t" style="top:83.7px;height:10px;line-height:10px;font-size:6.9px;color:#111;white-space:pre;left:262.5px;transform:scaleX(0.942);transform-origin:left center;">ID</div>
<div class="t" style="top:83.7px;height:10px;line-height:10px;font-size:6.9px;color:#111;white-space:pre;left:318px;">Código</div>
<div class="t" style="top:83.7px;height:10px;line-height:10px;font-size:6.9px;color:#111;white-space:pre;left:368px;">Numérico</div>
<div class="t" style="top:83.7px;height:10px;line-height:10px;font-size:6.9px;color:#111;white-space:pre;right:239.5px;text-align:right;">3</div>
<svg style="left:250.0px;top:93.1px" width="8" height="8" viewBox="0 0 10 10" preserveAspectRatio="none"><rect x="1" y="1.400" width="8" height="7.600" fill="#e4e4e4" stroke="#3c3c3c" stroke-width="1"/><rect x="2.400" y="2.800" width="5.200" height="1.400" fill="#555"/><rect x="2.400" y="5.200" width="2" height="2.600" fill="#777"/><rect x="5.400" y="5.200" width="2.200" height="2.600" fill="#999"/></svg>
<div class="t" style="top:92.1px;height:10px;line-height:10px;font-size:6.9px;color:#111;white-space:pre;left:262.5px;transform:scaleX(0.898);transform-origin:left center;">NAME</div>
<div class="t" style="top:92.1px;height:10px;line-height:10px;font-size:6.9px;color:#111;white-space:pre;left:318px;">Nombre</div>
<div class="t" style="top:92.1px;height:10px;line-height:10px;font-size:6.9px;color:#111;white-space:pre;left:368px;">Fórmula alfabética</div>
<div class="t" style="top:92.1px;height:10px;line-height:10px;font-size:6.9px;color:#111;white-space:pre;right:239.5px;text-align:right;">0</div>
<svg style="left:228.0px;top:103.4px" width="5" height="4.2" viewBox="0 0 5 4.2" preserveAspectRatio="none"><path d="M0 0h5L2.5 4.2z" fill="#666"/></svg>
<svg style="left:240.0px;top:101.5px" width="8" height="8" viewBox="0 0 10 10" preserveAspectRatio="none"><rect x="0.7" y="0.7" width="8.600" height="8.600" rx="0.5" fill="#fff" stroke="#233f6e" stroke-width="0.900"/><rect x="0.7" y="0.7" width="8.600" height="1.500" fill="#233f6e"/><path d="M1.800 4.300h3V2.900L8.400 5.600 4.800 8.300V6.900H1.800z" fill="#122c86"/></svg>
<div class="t" style="top:100.5px;height:10px;line-height:10px;font-size:6.9px;color:#111;white-space:pre;font-weight:bold;left:252.5px;">Índices</div>
<svg style="left:250.0px;top:109.9px" width="8" height="8" viewBox="0 0 10 10" preserveAspectRatio="none"><ellipse cx="5" cy="3.200" rx="2.700" ry="2.300" fill="#b87a34"/><circle cx="5" cy="2.800" r="0.700" fill="#ecc890"/><rect x="4" y="4.600" width="2" height="4.200" fill="#9a5c22"/></svg>
<div class="t" style="top:108.9px;height:10px;line-height:10px;font-size:6.9px;color:#111;white-space:pre;left:262.5px;transform:scaleX(0.942);transform-origin:left center;">ID</div>
<div class="t" style="top:108.9px;height:10px;line-height:10px;font-size:6.9px;color:#111;white-space:pre;left:318px;">Código</div>
<div class="t" style="top:108.9px;height:10px;line-height:10px;font-size:6.9px;color:#111;white-space:pre;left:368px;">Clave única</div>
<div class="t" style="top:108.9px;height:10px;line-height:10px;font-size:6.9px;color:#111;white-space:pre;right:239.5px;text-align:right;">3</div>
<svg style="left:250.0px;top:118.3px" width="8" height="8" viewBox="0 0 10 10" preserveAspectRatio="none"><rect x="0.7" y="0.7" width="8.600" height="8.600" rx="0.5" fill="#fff" stroke="#233f6e" stroke-width="0.900"/><rect x="0.7" y="0.7" width="8.600" height="1.500" fill="#233f6e"/><path d="M1.800 4.300h3V2.900L8.400 5.600 4.800 8.300V6.900H1.800z" fill="#122c86"/></svg>
<div class="t" style="top:117.3px;height:10px;line-height:10px;font-size:6.9px;color:#111;white-space:pre;left:262.5px;transform:scaleX(0.898);transform-origin:left center;">NAME</div>
<div class="t" style="top:117.3px;height:10px;line-height:10px;font-size:6.9px;color:#111;white-space:pre;left:318px;">Alfabético</div>
<div class="t" style="top:117.3px;height:10px;line-height:10px;font-size:6.9px;color:#111;white-space:pre;left:368px;">Acepta repetidas</div>
<div class="t" style="top:117.3px;height:10px;line-height:10px;font-size:6.9px;color:#111;white-space:pre;right:239.5px;text-align:right;">16</div>
<svg style="left:250.0px;top:126.69999999999999px" width="8" height="8" viewBox="0 0 10 10" preserveAspectRatio="none"><rect x="0.7" y="0.7" width="8.600" height="8.600" rx="0.5" fill="#fff" stroke="#233f6e" stroke-width="0.900"/><rect x="0.7" y="0.7" width="8.600" height="1.500" fill="#233f6e"/><path d="M1.800 4.300h3V2.900L8.400 5.600 4.800 8.300V6.900H1.800z" fill="#122c86"/></svg>
<div class="t" style="top:125.69999999999999px;height:10px;line-height:10px;font-size:6.9px;color:#111;white-space:pre;left:262.5px;transform:scaleX(0.839);transform-origin:left center;">WORDS</div>
<div class="t" style="top:125.69999999999999px;height:10px;line-height:10px;font-size:6.9px;color:#111;white-space:pre;left:318px;">Palabras</div>
<div class="t" style="top:125.69999999999999px;height:10px;line-height:10px;font-size:6.9px;color:#111;white-space:pre;left:368px;">Palabras</div>
<div class="t" style="top:125.69999999999999px;height:10px;line-height:10px;font-size:6.9px;color:#111;white-space:pre;right:239.5px;text-align:right;">10</div>
<svg style="left:250.0px;top:135.1px" width="8" height="8" viewBox="0 0 10 10" preserveAspectRatio="none"><rect x="0.7" y="0.7" width="8.600" height="8.600" rx="0.5" fill="#fff" stroke="#233f6e" stroke-width="0.900"/><rect x="0.7" y="0.7" width="8.600" height="1.500" fill="#233f6e"/><path d="M1.800 4.300h3V2.900L8.400 5.600 4.800 8.300V6.900H1.800z" fill="#122c86"/></svg>
<div class="t" style="top:134.1px;height:10px;line-height:10px;font-size:6.9px;color:#111;white-space:pre;left:262.5px;transform:scaleX(0.858);transform-origin:left center;">PARTS</div>
<div class="t" style="top:134.1px;height:10px;line-height:10px;font-size:6.9px;color:#111;white-space:pre;left:318px;">Trozos de p...</div>
<div class="t" style="top:134.1px;height:10px;line-height:10px;font-size:6.9px;color:#111;white-space:pre;left:368px;">Trozos de palabras</div>
<div class="t" style="top:134.1px;height:10px;line-height:10px;font-size:6.9px;color:#111;white-space:pre;right:239.5px;text-align:right;">6</div>
<svg style="left:240.0px;top:143.5px" width="8" height="8" viewBox="0 0 10 10" preserveAspectRatio="none"><rect x="0.7" y="0.7" width="8.600" height="8.600" rx="0.5" fill="#fff" stroke="#233f6e" stroke-width="0.900"/><rect x="0.7" y="0.7" width="8.600" height="1.500" fill="#233f6e"/><rect x="1.800" y="3" width="2.800" height="2.200" fill="#122c86"/><rect x="5.400" y="6" width="2.800" height="2.200" fill="#122c86"/><path d="M4.400 4l1.400 2.400" stroke="#122c86" stroke-width="0.900"/></svg>
<div class="t" style="top:142.5px;height:10px;line-height:10px;font-size:6.9px;color:#111;white-space:pre;font-weight:bold;left:252.5px;">Enlaces plurales</div>
<svg style="left:240.0px;top:151.9px" width="8" height="8" viewBox="0 0 10 10" preserveAspectRatio="none"><rect x="0.7" y="0.7" width="8.600" height="8.600" rx="0.5" fill="#fff" stroke="#233f6e" stroke-width="0.900"/><rect x="0.7" y="0.7" width="8.600" height="1.500" fill="#233f6e"/><path d="M2 4.400h6M2 6.900h6M6.400 3.200l1.600 1.200-1.600 1.200M3.600 5.700L2 6.900l1.600 1.200" stroke="#122c86" stroke-width="0.900" fill="none"/></svg>
<div class="t" style="top:150.9px;height:10px;line-height:10px;font-size:6.9px;color:#111;white-space:pre;font-weight:bold;left:252.5px;">Actualizaciones</div>
<svg style="left:240.0px;top:160.3px" width="8" height="8" viewBox="0 0 10 10" preserveAspectRatio="none"><rect x="0.7" y="0.7" width="8.600" height="8.600" rx="0.5" fill="#fff" stroke="#233f6e" stroke-width="0.900"/><rect x="0.7" y="0.7" width="8.600" height="1.500" fill="#233f6e"/><circle cx="5" cy="5.600" r="2.500" fill="#1a3f8f"/><circle cx="5" cy="5.600" r="0.900" fill="#fff"/></svg>
<div class="t" style="top:159.3px;height:10px;line-height:10px;font-size:6.9px;color:#111;white-space:pre;font-weight:bold;left:252.5px;">Eventos de tabla</div>
<svg style="left:240.0px;top:168.7px" width="8" height="8" viewBox="0 0 10 10" preserveAspectRatio="none"><rect x="0.8" y="0.8" width="8.4" height="8.4" rx="0.8" fill="#b0182c"/><rect x="0.8" y="0.8" width="2" height="8.4" fill="#2a3a7a"/><path d="M3.2 8L5.4 2.4 7.6 8M4 6.2h2.8" stroke="#fff" stroke-width="1.1" fill="none"/></svg>
<div class="t" style="top:167.7px;height:10px;line-height:10px;font-size:6.9px;color:#111;white-space:pre;font-weight:bold;left:252.5px;">Variables</div>
<div style="left:227px;top:415px;width:260.5px;height:7.4px;background:linear-gradient(#d8d8d8,#f4f4f4 40%,#ffffff);border-top:1px solid #c4c4c4;"></div>
<div style="left:228.5px;top:415.8px;width:242.5px;height:6px;background:linear-gradient(#cfcfcf,#ececec 45%,#f6f6f6);border-radius:3px;border:0.5px solid #b4b4b4;"></div>
<div style="left:229.5px;top:416px;width:228.5px;height:5.6px;background:linear-gradient(#ffffff,#e9e9e9 50%,#f8f8f8);border-radius:2.800px;border:0.800px solid #9a9a9a;"></div>
<div style="left:471.5px;top:415.5px;width:16px;height:6.9px;background:#fbfbfb;"></div>
<div style="left:479.3px;top:416px;width:0.7px;height:6px;background:#d4d4d4;"></div>
<svg style="left:473.79999999999995px;top:417.09999999999997px" width="3.2" height="3.6" viewBox="0 0 3.2 3.6" preserveAspectRatio="none"><path d="M3.200 0v3.600L0 1.800z" fill="#222"/></svg>
<svg style="left:481.7px;top:417.09999999999997px" width="3.2" height="3.6" viewBox="0 0 3.2 3.6" preserveAspectRatio="none"><path d="M0 0v3.600L3.200 1.800z" fill="#222"/></svg>
<div style="left:487.5px;top:33.5px;width:3px;height:389px;background:#e6e6e6;"></div>
<div style="left:489.2px;top:33.5px;width:1px;height:389px;background:#b4b4b4;"></div>
<div style="left:490px;top:33.5px;width:200px;height:11.5px;background:linear-gradient(#e8e8e8,#cfcfcf);border-bottom:1px solid #bcbcbc;"></div>
<div class="t" style="top:33.8px;height:10px;line-height:10px;font-size:6.1px;color:#000;white-space:pre;-webkit-text-stroke-width:0.06px;left:479px;width:200px;text-align:center;">Propiedades</div>
<svg style="left:670.1px;top:34.8px" width="8" height="8" viewBox="0 0 8 8" preserveAspectRatio="none"><circle cx="4" cy="4" r="3.700" fill="#303030"/><circle cx="4" cy="4" r="2" fill="#444" stroke="#cfcfcf" stroke-width="0.700"/><path d="M3.400 4.600l1.400-1.400" stroke="#e0e0e0" stroke-width="0.700"/></svg>
<svg style="left:680.5px;top:34.8px" width="8" height="8" viewBox="0 0 8 8" preserveAspectRatio="none"><circle cx="4" cy="4" r="3.700" fill="#303030"/><path d="M2.600 2.600l2.800 2.800M5.400 2.600l-2.800 2.800" stroke="#f8f8f8" stroke-width="1.050" stroke-linecap="round"/></svg>
<div style="left:490px;top:45px;width:200px;height:29px;background:#e2e2e2;"></div>
<svg style="left:494.8px;top:50.95px" width="17" height="16.5" viewBox="0 0 17 16.5" preserveAspectRatio="none"><rect x="0.6" y="0.6" width="15.800" height="15.300" rx="1.800" fill="#fff" stroke="#1f467a" stroke-width="1.200"/><path d="M0.600 3V2.400Q0.600 0.600 2.400 0.600H14.600Q16.400 0.600 16.400 2.400V3z" fill="#1f467a"/><path d="M6.400 13V5h5M6.400 8.800h4" stroke="#1a1a1a" stroke-width="1.500" fill="none"/></svg>
<div class="t" style="top:54.5px;height:10px;line-height:10px;font-size:6.6px;color:#111;white-space:pre;font-weight:bold;left:515px;">NAME</div>
<div class="t" style="top:54.5px;height:10px;line-height:10px;font-size:6.8px;color:#111;white-space:pre;right:3.5px;text-align:right;">Campo</div>
<div style="left:490px;top:74px;width:197.5px;height:166.5px;background:#fff;border:1px solid #c8c8c8;border-left:none;"></div>
<div style="left:490px;top:74.5px;width:192px;height:7px;background:linear-gradient(#ffffff,#efefef);border-bottom:1px solid #c8c8c8;"></div>
<div style="left:566.5px;top:74.5px;width:1px;height:7px;background:#c4c4c4;"></div>
<div style="left:681.6px;top:74.5px;width:5.9px;height:165.5px;background:#fdfdfd;border-left:1.300px solid #c2c2c2;"></div>
<div class="t" style="top:73.2px;height:10px;line-height:10px;font-size:6.0px;color:#000;white-space:pre;-webkit-text-stroke-width:0.06px;left:492px;">Descripción</div>
<div class="t" style="top:73.2px;height:10px;line-height:10px;font-size:6.0px;color:#000;white-space:pre;-webkit-text-stroke-width:0.06px;left:568.5px;">Valor</div>
<div style="left:500px;top:185.3px;width:182px;height:10.6px;background:#cacaca;"></div>
<svg style="left:491.0px;top:86.30000000000001px" width="5" height="4.2" viewBox="0 0 5 4.2" preserveAspectRatio="none"><path d="M0 0h5L2.5 4.2z" fill="#666"/></svg>
<div class="t" style="top:83.4px;height:10px;line-height:10px;font-size:6.9px;color:#111;white-space:pre;left:502.5px;">Propiedades</div>
<div class="t" style="top:94.80000000000001px;height:10px;line-height:10px;font-size:6.9px;color:#111;white-space:pre;left:512.5px;">Identificador</div>
<div class="t" style="top:94.80000000000001px;height:10px;line-height:10px;font-size:7.0px;color:#111;white-space:pre;font-weight:bold;left:568.5px;">NAME</div>
<div class="t" style="top:106.2px;height:10px;line-height:10px;font-size:6.9px;color:#111;white-space:pre;left:512.5px;">Nombre</div>
<div class="t" style="top:106.2px;height:10px;line-height:10px;font-size:7.0px;color:#111;white-space:pre;font-weight:bold;left:568.5px;">Nombre</div>
<div class="t" style="top:117.60000000000001px;height:10px;line-height:10px;font-size:6.9px;color:#111;white-space:pre;left:512.5px;">Estilos</div>
<div class="t" style="top:129.0px;height:10px;line-height:10px;font-size:6.9px;color:#111;white-space:pre;left:512.5px;">Comentarios</div>
<div class="t" style="top:140.4px;height:10px;line-height:10px;font-size:6.9px;color:#505050;white-space:pre;left:512.5px;">Tipo de enlace</div>
<div class="t" style="top:140.4px;height:10px;line-height:10px;font-size:7.2px;color:#222;white-space:pre;left:568.5px;">Ninguno</div>
<div class="t" style="top:151.8px;height:10px;line-height:10px;font-size:6.9px;color:#505050;white-space:pre;left:512.5px;">Tabla enlazada</div>
<div class="t" style="top:163.2px;height:10px;line-height:10px;font-size:6.9px;color:#505050;white-space:pre;left:512.5px;">Campo padre</div>
<div class="t" style="top:174.60000000000002px;height:10px;line-height:10px;font-size:6.9px;color:#111;white-space:pre;left:512.5px;">Tipo</div>
<div class="t" style="top:174.60000000000002px;height:10px;line-height:10px;font-size:7.0px;color:#111;white-space:pre;font-weight:bold;left:568.5px;">Fórmula alfabética</div>
<div class="t" style="top:186.0px;height:10px;line-height:10px;font-size:6.9px;color:#111;white-space:pre;left:512.5px;">Formula</div>
<div class="t" style="top:186.0px;height:10px;line-height:10px;font-size:7.0px;color:#111;white-space:pre;font-weight:bold;left:568.5px;">toUpper(#NAME)</div>
<div class="t" style="top:197.4px;height:10px;line-height:10px;font-size:6.9px;color:#505050;white-space:pre;left:512.5px;">Longitud</div>
<div class="t" style="top:197.4px;height:10px;line-height:10px;font-size:7.0px;color:#111;white-space:pre;font-weight:bold;left:568.5px;">0</div>
<div class="t" style="top:208.8px;height:10px;line-height:10px;font-size:6.9px;color:#505050;white-space:pre;left:512.5px;">Información</div>
<svg style="left:568.5px;top:153.3px" width="8" height="7" viewBox="0 0 8 7" preserveAspectRatio="none"><path d="M0.500 1h2.600l.6.800h3.800v4.700h-7z" fill="#6f98d4"/><rect x="0.500" y="2.600" width="7" height="3.900" fill="#9dbce8"/></svg>
<svg style="left:568.75px;top:164.45px" width="7.5" height="7.5" viewBox="0 0 10 10" preserveAspectRatio="none"><rect x="0.7" y="0.7" width="8.600" height="8.600" rx="0.5" fill="#fff" stroke="#1f3a62" stroke-width="0.900"/><rect x="0.7" y="0.7" width="8.600" height="1.500" fill="#1f3a62"/><path d="M3.800 8.200V3.600h3M3.800 5.800h2.400" stroke="#111" stroke-width="1.300" fill="none"/></svg>
<div style="left:490px;top:242px;width:200px;height:10.5px;background:linear-gradient(#e2e2e2,#cdcdcd);border-top:1px solid #c8c8c8;border-bottom:1px solid #bcbcbc;"></div>
<div class="t" style="top:242.5px;height:10px;line-height:10px;font-size:6.1px;color:#000;white-space:pre;-webkit-text-stroke-width:0.06px;left:479px;width:200px;text-align:center;">Subobjetos</div>
<svg style="left:670.1px;top:243.3px" width="8" height="8" viewBox="0 0 8 8" preserveAspectRatio="none"><circle cx="4" cy="4" r="3.700" fill="#303030"/><circle cx="4" cy="4" r="2" fill="#444" stroke="#cfcfcf" stroke-width="0.700"/><path d="M3.400 4.600l1.400-1.400" stroke="#e0e0e0" stroke-width="0.700"/></svg>
<svg style="left:680.5px;top:243.3px" width="8" height="8" viewBox="0 0 8 8" preserveAspectRatio="none"><circle cx="4" cy="4" r="3.700" fill="#303030"/><path d="M2.600 2.600l2.800 2.800M5.400 2.600l-2.800 2.800" stroke="#f8f8f8" stroke-width="1.050" stroke-linecap="round"/></svg>
<div style="left:490.5px;top:258.9px;width:177px;height:163.6px;background:#dcdcdc;border:1px solid #c0c0c0;border-radius:2px;"></div>
<div style="left:534.5px;top:254.5px;width:88px;height:10.2px;background:linear-gradient(#fdfdfd,#e9e9e9);border:1px solid #a8a8a8;border-radius:2.500px;"></div>
<div style="left:535.5px;top:255.5px;width:43px;height:8.2px;background:linear-gradient(#e0e0e0,#d4d4d4);"></div>
<div style="left:578.5px;top:255px;width:1px;height:9.2px;background:#b4b4b4;"></div>
<svg style="left:537.0px;top:255.8px" width="8" height="8" viewBox="0 0 10 10" preserveAspectRatio="none"><rect x="0.7" y="0.7" width="8.600" height="8.600" rx="0.5" fill="#fff" stroke="#1f3a62" stroke-width="0.900"/><rect x="0.7" y="0.7" width="8.600" height="1.500" fill="#1f3a62"/><path d="M3.800 8.200V3.600h3M3.800 5.800h2.400" stroke="#111" stroke-width="1.300" fill="none"/></svg>
<div class="t" style="top:254.8px;height:10px;line-height:10px;font-size:6.6px;color:#111;white-space:pre;left:550px;">Campos</div>
<svg style="left:583.0px;top:255.8px" width="8" height="8" viewBox="0 0 10 10" preserveAspectRatio="none"><rect x="0.7" y="0.7" width="8.600" height="8.600" rx="0.5" fill="#fff" stroke="#233f6e" stroke-width="0.900"/><rect x="0.7" y="0.7" width="8.600" height="1.500" fill="#233f6e"/><path d="M1.800 4.300h3V2.900L8.400 5.600 4.800 8.300V6.900H1.800z" fill="#122c86"/></svg>
<div class="t" style="top:254.8px;height:10px;line-height:10px;font-size:6.6px;color:#111;white-space:pre;left:596.5px;">Índices</div>
<div style="left:491px;top:268.5px;width:176px;height:153.5px;background:#fff;border:1px solid #c8c8c8;"></div>
<div style="left:491.5px;top:269px;width:175px;height:7px;background:linear-gradient(#ffffff,#efefef);border-bottom:1px solid #c8c8c8;"></div>
<div style="left:587.5px;top:269px;width:1px;height:7px;background:#c4c4c4;"></div>
<div style="left:637.5px;top:269px;width:1px;height:7px;background:#c4c4c4;"></div>
<div class="t" style="top:267.1px;height:10px;line-height:10px;font-size:6.0px;color:#000;white-space:pre;-webkit-text-stroke-width:0.06px;left:493.5px;">Identificador</div>
<div class="t" style="top:267.1px;height:10px;line-height:10px;font-size:6.0px;color:#000;white-space:pre;-webkit-text-stroke-width:0.06px;left:590.5px;">Tipo</div>
<div class="t" style="top:267.1px;height:10px;line-height:10px;font-size:6.0px;color:#000;white-space:pre;-webkit-text-stroke-width:0.06px;left:639.5px;">Longitud</div>
<div style="left:491.5px;top:285.4px;width:175px;height:7.2px;background:#cacaca;"></div>
<svg style="left:493.5px;top:276.5px" width="8" height="8" viewBox="0 0 10 10" preserveAspectRatio="none"><ellipse cx="5" cy="3.200" rx="2.700" ry="2.300" fill="#b87a34"/><circle cx="5" cy="2.800" r="0.700" fill="#ecc890"/><rect x="4" y="4.600" width="2" height="4.200" fill="#9a5c22"/></svg>
<div class="t" style="top:275.5px;height:10px;line-height:10px;font-size:6.9px;color:#111;white-space:pre;left:507px;">ID</div>
<div class="t" style="top:275.5px;height:10px;line-height:10px;font-size:6.9px;color:#111;white-space:pre;left:590.5px;">Numérico</div>
<div class="t" style="top:275.5px;height:10px;line-height:10px;font-size:6.9px;color:#111;white-space:pre;right:26px;text-align:right;">3</div>
<svg style="left:493.5px;top:284.7px" width="8" height="8" viewBox="0 0 10 10" preserveAspectRatio="none"><rect x="1" y="1.400" width="8" height="7.600" fill="#e4e4e4" stroke="#3c3c3c" stroke-width="1"/><rect x="2.400" y="2.800" width="5.200" height="1.400" fill="#555"/><rect x="2.400" y="5.200" width="2" height="2.600" fill="#777"/><rect x="5.400" y="5.200" width="2.200" height="2.600" fill="#999"/></svg>
<div class="t" style="top:283.7px;height:10px;line-height:10px;font-size:6.9px;color:#111;white-space:pre;left:507px;">NAME</div>
<div class="t" style="top:283.7px;height:10px;line-height:10px;font-size:6.9px;color:#111;white-space:pre;left:590.5px;">Fórmula alf...</div>
<div class="t" style="top:283.7px;height:10px;line-height:10px;font-size:6.9px;color:#111;white-space:pre;right:26px;text-align:right;">0</div>
<div style="left:668px;top:254px;width:22px;height:169.5px;background:linear-gradient(90deg,#ececec,#e2e2e2 45%,#c6c6c6);"></div>
<div style="left:672px;top:256.5px;width:17px;height:3px;background:repeating-linear-gradient(135deg,#c8c8c8 0,#c8c8c8 1px,#e8e8e8 1px,#e8e8e8 2.2px);"></div>
<svg style="left:675.4px;top:266.09999999999997px" width="7.8" height="8.6" viewBox="0 0 8 10" preserveAspectRatio="none"><path d="M4 0.500L7.600 4.600H5.600V9.500H2.400V4.600H0.400z" fill="#2f7fe0" stroke="#1f5fb0" stroke-width="0.5"/></svg>
<svg style="left:675.4px;top:288.9px" width="7.8" height="8.6" viewBox="0 0 8 10" preserveAspectRatio="none"><path d="M4 9.500L7.600 5.400H5.600V0.500H2.400V5.400H0.400z" fill="#a9c6ee" stroke="#8fb0dc" stroke-width="0.5"/></svg>
<svg style="left:675.0px;top:317.5px" width="8" height="8" viewBox="0 0 8 8" preserveAspectRatio="none"><circle cx="4" cy="4" r="3.600" fill="#2f9a34"/><path d="M4 2v4M2 4h4" stroke="#f0faf0" stroke-width="1.300"/></svg>
<svg style="left:675.0px;top:339.3px" width="8" height="8" viewBox="0 0 8 8" preserveAspectRatio="none"><circle cx="4" cy="4" r="3.600" fill="#d9382c"/><path d="M2.700 2.700l2.600 2.600M5.300 2.700L2.700 5.300" stroke="#fbe0dc" stroke-width="1.100"/></svg>
<div style="left:670px;top:306px;width:18px;height:0.8px;background:#cccccc;"></div>
<div style="left:0px;top:422px;width:690px;height:13px;background:#e2e2e2;"></div>
<svg style="left:679.5px;top:424.5px" width="9" height="9" viewBox="0 0 9 9" preserveAspectRatio="none"><path d="M8.500 2L2 8.500M8.500 5L5 8.500" stroke="#a8a8a8" stroke-width="0.800"/></svg>
</body></html>
